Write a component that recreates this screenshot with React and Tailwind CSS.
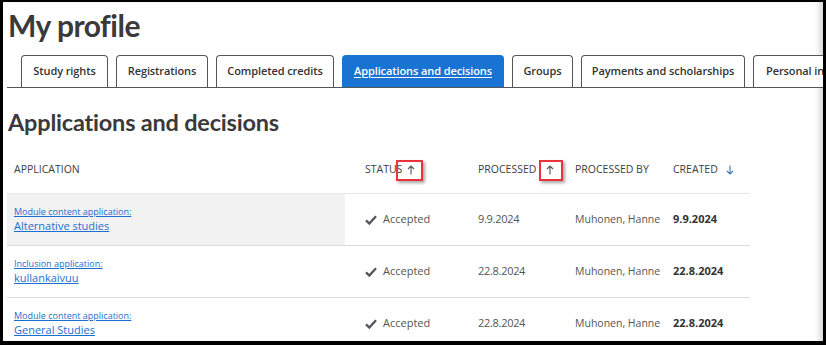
import React from "react";

const tabs = [
  { label: "Study rights", w: "w-[87px]" },
  { label: "Registrations", w: "w-[92px]" },
  { label: "Completed credits", w: "w-[118px]" },
  { label: "Applications and decisions", w: "w-[162px]", active: true },
  { label: "Groups", w: "w-[61px]" },
  { label: "Payments and scholarships", w: "w-[164px]" },
  { label: "Personal information", w: "w-[150px]", left: true },
];

const rows = [
  { type: "Module content application:", name: "Alternative studies", processed: "9.9.2024", created: "9.9.2024", shaded: true },
  { type: "Inclusion application:", name: "kullankaivuu", processed: "22.8.2024", created: "22.8.2024" },
  { type: "Module content application:", name: "General Studies", processed: "22.8.2024", created: "22.8.2024" },
];

const ArrowUp = ({ className = "" }) => (
  <svg width="8" height="10" viewBox="0 0 8 10" className={className} fill="none" stroke="currentColor" strokeWidth="1.1">
    <path d="M4 9.5V1M1 4L4 1L7 4" />
  </svg>
);

const ArrowDown = ({ className = "" }) => (
  <svg width="8" height="10" viewBox="0 0 8 10" className={className} fill="none" stroke="currentColor" strokeWidth="1.1">
    <path d="M4 0.5V9M1 6L4 9L7 6" />
  </svg>
);

const Check = () => (
  <svg width="12" height="10" viewBox="0 0 12 10" className="text-[#555]" fill="none" stroke="currentColor" strokeWidth="2.3">
    <path d="M1 5.4L4.3 8.6L11 1.2" />
  </svg>
);

const Marker = ({ className }) => (
  <span className={`absolute border-2 border-[#e8343c] shadow-[2px_2px_3px_rgba(0,0,0,0.35)] ${className}`} />
);

export default function App() {
  return (
    <div className="w-[826px] h-[345px] bg-white border-l-[3px] border-t-2 border-r-[3px] border-b-4 border-black overflow-hidden shadow-[inset_-7px_0_6px_-4px_rgba(0,0,0,0.18)] font-['Open_Sans',sans-serif] text-[#333]">
      <div className="pl-[4px] pt-[4px]">
        <h1 className="pl-[1px] font-['Lato',sans-serif] text-[30px] leading-[38px] font-bold tracking-[-0.5px] text-[#3a3a3a]">My profile</h1>

        <div className="mt-[11px] border-b border-[#555] pl-[14px] flex gap-2 items-end whitespace-nowrap">
          {tabs.map((t) => (
            <div
              key={t.label}
              className={`${t.w} shrink-0 h-[32px] flex items-center rounded-t-[4px] text-[11px] font-semibold tracking-[-0.1px] ${
                t.left ? "justify-start pl-[12px]" : "justify-center"
              } ${
                t.active
                  ? "bg-[#1873d3] text-white underline underline-offset-2"
                  : "border border-b-0 border-[#555] text-[#333] bg-white"
              }`}
            >
              {t.label}
            </div>
          ))}
        </div>

        <h2 className="mt-[18px] pl-[1px] font-['Lato',sans-serif] text-[23.5px] leading-[32px] font-bold tracking-[-0.2px] text-[#3a3a3a]">Applications and decisions</h2>

        <div className="mt-[8px] w-[743px] text-[11px]">
          <div className="grid grid-cols-[338px_121px_97px_98px_89px] h-[48px] border-b border-[#e6e6e6] uppercase text-[#3d3d3d] text-[10.5px]">
            <div className="pl-[7px] flex items-center">Application</div>
            <div className="pl-[20px] relative flex items-center">
              <span>Status</span>
              <ArrowUp className="absolute left-[62px] top-[19px] text-[#555]" />
              <Marker className="left-[51px] top-[14px] w-[27px] h-[21px]" />
            </div>
            <div className="pl-[12px] relative flex items-center">
              <span>Processed</span>
              <ArrowUp className="absolute left-[80px] top-[19px] text-[#555]" />
              <Marker className="left-[73px] top-[14px] w-[24px] h-[21px]" />
            </div>
            <div className="pl-[12px] flex items-center">Processed by</div>
            <div className="pl-[12px] relative flex items-center">
              <span>Created</span>
              <ArrowDown className="absolute left-[65px] top-[19px] text-[#3b78c9]" />
            </div>
          </div>

          {rows.map((r, i) => (
            <div key={i} className="grid grid-cols-[338px_121px_97px_98px_89px] h-[52px] items-stretch border-b border-[#dcdcdc]">
              <div className={`pl-[7px] flex flex-col justify-center ${r.shaded ? "bg-[#f2f2f2]" : ""}`}>
                <span className="text-[9px] leading-[12px] text-[#1a6fd0] underline">{r.type}</span>
                <span className="text-[11px] leading-[15px] text-[#1a6fd0] underline">{r.name}</span>
              </div>
              <div className="pl-[20px] flex items-center gap-[6px] text-[#555]">
                <Check />
                <span>Accepted</span>
              </div>
              <div className="pl-[12px] flex items-center text-[#555] tracking-[-0.3px]">{r.processed}</div>
              <div className="pl-[12px] flex items-center text-[#555] whitespace-nowrap text-[10.5px]">Muhonen, Hanne</div>
              <div className="pl-[12px] flex items-center font-bold text-[#333]">{r.created}</div>
            </div>
          ))}
        </div>
      </div>
    </div>
  );
}
